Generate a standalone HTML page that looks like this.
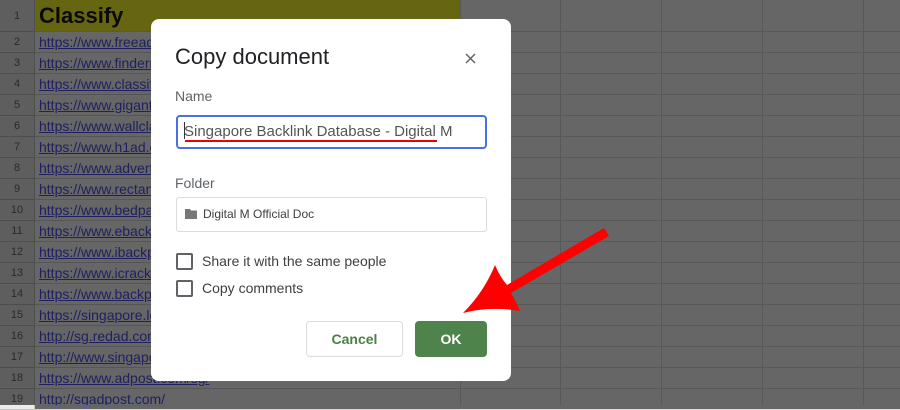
<!DOCTYPE html>
<html style="background:#666"><head><meta charset="utf-8"><style>
*{margin:0;padding:0;box-sizing:border-box}
body{width:900px;height:405px;overflow:hidden;background:#fff;font-family:"Liberation Sans",Arial,sans-serif;position:relative}
.rh{position:absolute;left:0;width:35px;background:#ebebeb;border-bottom:1px solid #c4c4c4;border-right:1px solid #c4c4c4;color:#696969;font-size:11px;text-align:center}
.cell{position:absolute;left:35px;width:425px;border-bottom:1px solid #d6d6d6;color:#4d50f0;font-size:14px;padding-left:4px;text-decoration:underline;white-space:nowrap;overflow:hidden}
.vl{position:absolute;top:0;height:405px;width:1px;background:#dcdcdc}
.hl{position:absolute;left:460px;width:440px;height:1px;background:#dcdcdc}
.ov{position:absolute;left:0;top:0;width:900px;height:405px;background:rgba(0,0,0,0.6)}
.dlg{position:absolute;left:151px;top:19px;width:360px;height:362px;background:#fff;border-radius:8px}
.t{position:absolute;font-family:"Liberation Sans",sans-serif}
</style></head><body>
<div class="rh" style="top:0;height:32px;line-height:32px">1</div>
<div style="position:absolute;left:35px;top:0;width:425px;height:32px;background:#ffff2d;font-weight:bold;font-size:22px;color:#1a1a1a;padding-left:4px;line-height:32px;border-bottom:1px solid #d6d6d6">Classify</div>
<div class="vl" style="left:460px"></div><div class="vl" style="left:560px"></div><div class="vl" style="left:661px"></div><div class="vl" style="left:762px"></div><div class="vl" style="left:863px"></div>
<div class="hl" style="top:31px"></div>
<div id="rows"></div>
<script>
var urls=["https://www.freeads.com.sg/","https://www.findermaster.com/","https://www.classifieds.com/","https://www.gigantic.com/","https://www.wallclassifieds.com/","https://www.h1ad.com/","https://www.advertiseera.com/","https://www.rectanglead.com/","https://www.bedpage.com/","https://www.ebackpage.com/","https://www.ibackpage.com/","https://www.icrackers.com/","https://www.backpage.com/","https://singapore.locanto.sg/","http://sg.redad.com/","http://www.singapore.com/","https://www.adpost.com/sg/","http://sgadpost.com/"];
var h="";for(var i=0;i<18;i++){var t=32+21*i;h+='<div class="rh" style="top:'+t+'px;height:21px;line-height:21px">'+(i+2)+'</div><div class="cell" style="top:'+t+'px;height:21px;line-height:20px">'+urls[i]+'</div><div class="hl" style="top:'+(t+20)+'px"></div>';}
document.getElementById("rows").innerHTML=h;
</script>
<div class="ov"></div>
<div class="dlg">
<div class="t" style="left:24px;top:25px;font-size:22px;color:#202124">Copy document</div>
<svg style="position:absolute;left:314px;top:34px" width="11" height="11"><path d="M1 1L10 10M10 1L1 10" stroke="#5f6368" stroke-width="1.5"/></svg>
<div class="t" style="left:24px;top:69px;font-size:14px;color:#5f6368">Name</div>
<div style="position:absolute;left:25px;top:96px;width:311px;height:34px;border:2px solid #4a6fe0;border-radius:4px"></div>
<div class="t" style="left:33px;top:104px;font-size:15px;color:#555">Singapore Backlink Database - Digital M</div>
<div style="position:absolute;left:33px;top:103px;width:1px;height:17px;background:#333"></div>
<div style="position:absolute;left:34px;top:121px;width:252px;height:2px;background:#e00"></div>
<div class="t" style="left:24px;top:156px;font-size:14px;color:#5f6368">Folder</div>
<div style="position:absolute;left:25px;top:178px;width:311px;height:35px;border:1px solid #dadce0;border-radius:3px"></div>
<svg style="position:absolute;left:34px;top:190px" width="12" height="10"><path d="M0 0H5L6 1.5H12V10H0Z" fill="#777"/></svg>
<div class="t" style="left:52px;top:188px;font-size:12px;color:#3c4043">Digital M Official Doc</div>
<div style="position:absolute;left:25px;top:234px;width:17px;height:17px;border:2px solid #5f6368;border-radius:2px"></div>
<div class="t" style="left:51px;top:234px;font-size:14px;color:#3c4043">Share it with the same people</div>
<div style="position:absolute;left:25px;top:261px;width:17px;height:17px;border:2px solid #5f6368;border-radius:2px"></div>
<div class="t" style="left:51px;top:261px;font-size:14px;color:#3c4043">Copy comments</div>
<div style="position:absolute;left:155px;top:302px;width:97px;height:36px;border:1px solid #dadce0;border-radius:4px;color:#4a7f45;font-size:14px;font-weight:bold;text-align:center;line-height:34px">Cancel</div>
<div style="position:absolute;left:264px;top:302px;width:72px;height:36px;background:#4f834c;border-radius:4px;color:#fff;font-size:14px;font-weight:bold;text-align:center;line-height:36px">OK</div>
</div>
<svg style="position:absolute;left:0;top:0" width="900" height="405"><path d="M604 228L609 236L511 293Q517 303 520 311Q490 306 463 313Q484 292 495 265Q500 277 507 285Z" fill="#f00"/></svg>
</body></html>
